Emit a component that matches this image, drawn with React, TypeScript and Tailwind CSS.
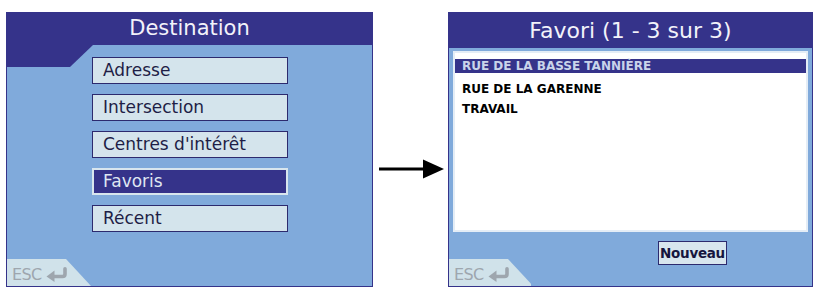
const NAVY = 'bg-[#35338a]'

function ReturnArrow() {
  return (
    <svg width="23" height="15" viewBox="0 0 23 15" className="shrink-0">
      <path d="M20 1.8 V7 Q20 9.5 17.5 9.5 H8" fill="none" stroke="#9ea6ae" strokeWidth="3.6" strokeLinecap="round" />
      <polygon points="9.5,3.5 1.5,9.5 9.5,15" fill="#9ea6ae" />
    </svg>
  )
}

function EscTab() {
  return (
    <div className="flex h-[27px] w-[84px] items-center gap-[3px] bg-[#d0e2ea] pl-[5px] pt-[4px] [clip-path:polygon(0_0,59px_0,100%_100%,0_100%)]">
      <span className="text-[16px] leading-none tracking-[-0.6px] text-[#9ea6ae]">ESC</span>
      <ReturnArrow />
    </div>
  )
}

const menu = ['Adresse', 'Intersection', "Centres d'intérêt", 'Favoris', 'Récent']

function DestinationPanel() {
  return (
    <div className="flex h-[275px] w-[367px] shrink-0 flex-col border border-[#35338a] bg-[#80aadb]">
      <div className={`${NAVY} flex h-[32px] items-center justify-center text-[21px] text-[#f2f2fa]`}>
        Destination
      </div>
      <div className="flex flex-1">
        <div className="flex w-[85px] shrink-0 flex-col justify-between">
          <div className={`${NAVY} h-[22px] w-[86px] [clip-path:polygon(0_0,100%_0,63px_100%,0_100%)]`} />
          <EscTab />
        </div>
        <div className="flex flex-col gap-[10px] pt-[12px]">
          {menu.map((item) => {
            const active = item === 'Favoris'
            return (
              <div
                key={item}
                className={
                  active
                    ? 'flex h-[27px] w-[196px] items-center border-2 border-[#d8e6ee] bg-[#35338a] pl-[9px] text-[17px] text-[#dfe6f2]'
                    : 'flex h-[27px] w-[196px] items-center border border-[#2c2a6e] bg-[#d4e4ec] pl-[10px] text-[17px] text-[#1e1e46]'
                }
              >
                {item}
              </div>
            )
          })}
        </div>
      </div>
    </div>
  )
}

const favoris = ['RUE DE LA BASSE TANNIÈRE', 'RUE DE LA GARENNE', 'TRAVAIL']

function FavoriPanel() {
  return (
    <div className="flex h-[275px] w-[365px] shrink-0 flex-col border border-[#35338a] bg-[#80aadb]">
      <div className={`${NAVY} flex h-[35px] items-center justify-center text-[22px] text-[#f2f2fa]`}>
        Favori (1 - 3 sur 3)
      </div>
      <div className="mx-[4px] mt-[3px] h-[181px] border-2 border-[#e4edf6] bg-white pt-[6px] text-[12px] font-bold text-black">
        {favoris.map((name, i) =>
          i === 0 ? (
            <div key={name} className="h-[20px]">
              <div className="flex h-[14px] items-center bg-[#35338a] pl-[7px] leading-[14px] text-[#c9d3ea]">
                {name}
              </div>
            </div>
          ) : (
            <div key={name} className="pl-[7px] leading-[20px]">
              {name}
            </div>
          )
        )}
      </div>
      <div className="flex flex-1">
        <div className="self-end">
          <div className="w-[82px] overflow-hidden">
            <EscTab />
          </div>
        </div>
        <div className="ml-[127px] mt-[9px] flex h-[24px] w-[69px] items-center justify-center self-start border border-[#2c2a6e] bg-[#d8e6ee] text-[13.5px] font-bold tracking-[-0.3px] text-[#16163e]">
          Nouveau
        </div>
      </div>
    </div>
  )
}

export default function App() {
  return (
    <div className="flex h-[287px] w-[815px] overflow-hidden bg-white pl-[6px] pt-[12px] font-['DejaVu_Sans',sans-serif]">
      <DestinationPanel />
      <div className="flex w-[75px] shrink-0 justify-center pt-[147px]">
        <svg width="70" height="20" viewBox="0 0 70 20">
          <line x1="3" y1="10" x2="50" y2="10" stroke="black" strokeWidth="3" />
          <polygon points="47,0.5 68,10 47,19.5" fill="black" />
        </svg>
      </div>
      <FavoriPanel />
    </div>
  )
}
